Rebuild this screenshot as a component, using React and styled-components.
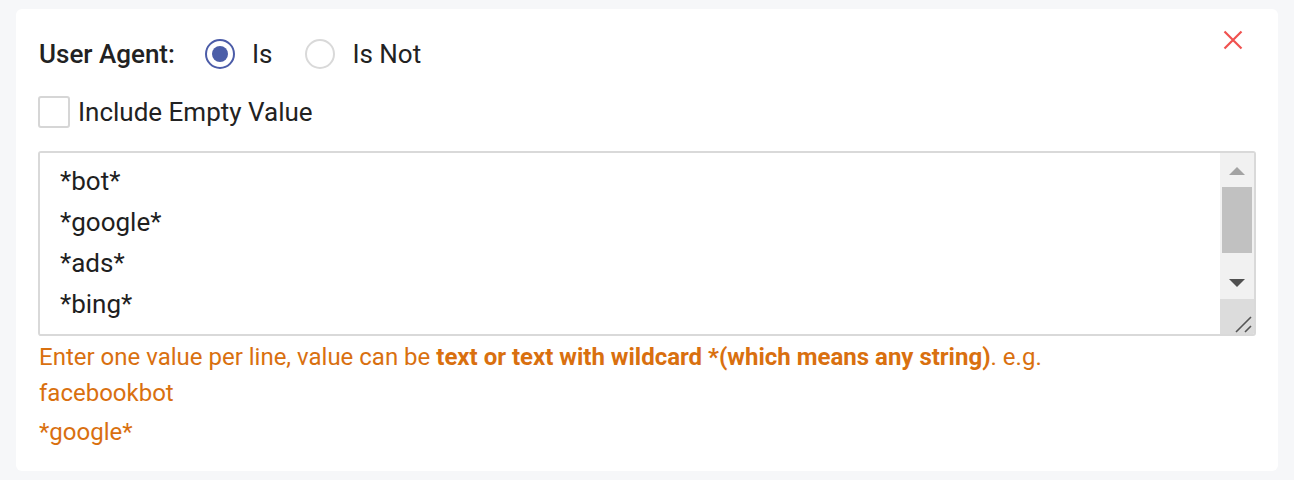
import React from 'react';
import styled, { createGlobalStyle } from 'styled-components';

const GlobalStyle = createGlobalStyle`
  body {
    margin: 0;
    padding: 9px 16px;
    background-color: #f6f7f9;
    font-family: Roboto, "Liberation Sans", Arial, sans-serif;
  }
`;

const Card = styled.div`
  position: relative;
  box-sizing: border-box;
  height: 462px;
  background-color: #ffffff;
  border-radius: 6px;
  padding: 26px 22px 0 22px;
`;

const CloseButton = styled.button`
  position: absolute;
  top: 21px;
  right: 35px;
  width: 20px;
  height: 20px;
  padding: 0;
  border: none;
  background: none;
  cursor: pointer;
  svg { display: block; }
`;

const Row = styled.div`
  display: flex;
  align-items: center;
  height: 38px;
  font-size: 26px;
  color: #222;
`;

const Label = styled.span`
  font-weight: 500;
  margin-left: 1px;
  margin-right: 30px;
`;

const RadioOption = styled.label`
  display: flex;
  align-items: center;
  gap: 17px;
  margin-right: 33px;
  cursor: pointer;
`;

const RadioCircle = styled.span`
  box-sizing: border-box;
  width: 30px;
  height: 30px;
  border-radius: 50%;
  border: 2px solid ${p => (p.checked ? '#4b5ca8' : '#d9d9d9')};
  display: flex;
  align-items: center;
  justify-content: center;
  &::after {
    content: '';
    width: 16px;
    height: 16px;
    border-radius: 50%;
    background: ${p => (p.checked ? '#4b5ea8' : 'transparent')};
  }
`;

const CheckRow = styled.label`
  display: flex;
  align-items: center;
  gap: 8px;
  height: 38px;
  margin-top: 20px;
  font-size: 26px;
  color: #222;
  cursor: pointer;
`;

const CheckBox = styled.span`
  box-sizing: border-box;
  width: 32px;
  height: 32px;
  border: 2px solid #d6d6d6;
  border-radius: 3px;
`;

const ValuesBox = styled.div`
  display: flex;
  box-sizing: border-box;
  height: 185px;
  margin-top: 20px;
  border: 2px solid #d9d9d9;
  border-radius: 3px;
  overflow: hidden;
`;

const Values = styled.textarea`
  flex: 1;
  min-width: 0;
  box-sizing: border-box;
  margin: 0;
  padding: 8px 20px;
  border: none;
  font-family: Roboto, "Liberation Sans", Arial, sans-serif;
  font-size: 26px;
  line-height: 41px;
  color: #1f1f1f;
  resize: none;
  outline: none;
  overflow: hidden;
`;

const ScrollBar = styled.div`
  width: 34px;
  display: flex;
  flex-direction: column;
  background: #f1f1f1;
`;

const ScrollButton = styled.div`
  height: 34px;
  flex: none;
  svg { display: block; }
`;

const Track = styled.div`
  flex: 1;
  padding: 0 2px;
`;

const Thumb = styled.div`
  height: 66px;
  background: #c1c1c1;
`;

const Corner = styled.div`
  height: 35px;
  flex: none;
  background: #dcdcdc;
  svg { display: block; }
`;

const Help = styled.div`
  margin-top: 3px;
  margin-left: 1px;
  font-size: 24px;
  color: #d9700f;
  b { font-weight: 700; }
`;

const HelpLine = styled.div`
  line-height: ${p => p.$lh || 36}px;
`;

const values = ['*bot*', '*google*', '*ads*', '*bing*', '*yahoo*'].join('\n');

export default function App() {
  return (
    <>
      <GlobalStyle />
      <Card>
        <CloseButton aria-label="Remove">
          <svg width="20" height="20" viewBox="0 0 20 20">
            <path d="M1.5 1.5 L18.5 18.5 M18.5 1.5 L1.5 18.5" stroke="#f0514f" strokeWidth="2.2" fill="none" />
          </svg>
        </CloseButton>
        <Row>
          <Label>User Agent:</Label>
          <RadioOption>
            <RadioCircle checked />
            Is
          </RadioOption>
          <RadioOption>
            <RadioCircle />
            Is Not
          </RadioOption>
        </Row>
        <CheckRow>
          <CheckBox />
          Include Empty Value
        </CheckRow>
        <ValuesBox>
          <Values defaultValue={values} spellCheck={false} />
          <ScrollBar>
            <ScrollButton>
              <svg width="34" height="34" viewBox="0 0 34 34">
                <polygon points="9,22 25,22 17,14" fill="#a3a3a3" />
              </svg>
            </ScrollButton>
            <Track>
              <Thumb />
            </Track>
            <ScrollButton>
              <svg width="34" height="34" viewBox="0 0 34 34">
                <polygon points="9,14 25,14 17,22" fill="#505050" />
              </svg>
            </ScrollButton>
            <Corner>
              <svg width="34" height="35" viewBox="0 0 34 35">
                <path d="M16 33 L31 18 M25 33 L31 27" stroke="#555" strokeWidth="1.6" fill="none" />
              </svg>
            </Corner>
          </ScrollBar>
        </ValuesBox>
        <Help>
          <HelpLine>
            Enter one value per line, value can be <b>text or text with wildcard *(which means any string)</b>. e.g.
          </HelpLine>
          <HelpLine>facebookbot</HelpLine>
          <HelpLine $lh={42}>*google*</HelpLine>
        </Help>
      </Card>
    </>
  );
}
